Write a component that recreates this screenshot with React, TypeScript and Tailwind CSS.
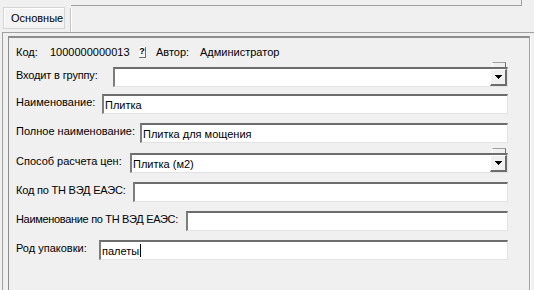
import React from "react";

const inputCls =
  "relative h-[20px] bg-white border-t-2 border-l-2 border-r border-b border-t-[#6d6d6d] border-l-[#7d7d7d] border-r-[#e3e3e3] border-b-[#e3e3e3] flex items-center";

function DropBtn() {
  return (
    <>
      <div className="absolute right-[1px] top-[-7px] w-[14px] h-[5px] border-t border-l border-r border-t-[#a0a0a0] border-l-white border-r-[#6d6d6d] bg-[#f0f0f0]" />
      <div className="absolute right-0 top-0 w-[17px] h-[17px] bg-[#f0f0f0] border-t border-l border-t-white border-l-white border-r-2 border-b-2 border-r-[#6d6d6d] border-b-[#6d6d6d] flex items-center justify-center">
        <svg width="7" height="4" viewBox="0 0 7 4">
          <path d="M0 0H7V1H6V2H5V3H4V4H3V3H2V2H1V1H0Z" fill="#000" />
        </svg>
      </div>
    </>
  );
}

function Row({
  label,
  labelW,
  mt,
  value,
  combo,
  caret,
  ls,
}: {
  label: string;
  labelW: number;
  mt: number;
  value?: string;
  combo?: boolean;
  caret?: boolean;
  ls?: number;
}) {
  return (
    <div className="flex items-start" style={{ marginTop: mt }}>
      <div
        className="leading-[16px] shrink-0 whitespace-nowrap"
        style={{ width: labelW, letterSpacing: ls ?? 0 }}
      >
        {label}
      </div>
      <div className={inputCls + " w-0 flex-1"}>
        {value && <span className="pl-[1px] leading-[16px]">{value}</span>}
        {caret && <span className="ml-[1px] w-px h-[13px] bg-black" />}
        {combo && <DropBtn />}
      </div>
    </div>
  );
}

export default function App() {
  return (
    <div
      className="w-[534px] h-[290px] bg-[#f0f0f0] overflow-hidden flex flex-col text-[11px] text-black"
      style={{ fontFamily: '"Liberation Sans", Arial, sans-serif' }}
    >
      <div className="h-[32px] flex items-start shrink-0">
        <div className="ml-[3px] mt-[7px] w-[62px] h-[22px] border border-[#d4d4d4] bg-[#f3f3f3] flex items-center pl-[7px] shadow-[inset_1px_1px_0_#ffffff]">
          Основные
        </div>
        <div className="ml-[5px] mt-[8px] h-[24px] w-px bg-[#c4c4c4] shadow-[1px_0_0_#ffffff]" />
        <div className="h-[6px] w-[451px] border-b border-r border-[#a0a0a0]" />
      </div>
      <div className="flex-1 ml-[2px] border-l border-t border-[#a0a0a0] pt-[3px] pl-[5px] pr-[4px]">
        <div className="h-full border-t-2 border-l border-r border-t-[#8c8c8c] border-l-[#8c8c8c] border-r-[#a0a0a0] shadow-[1px_0_0_#ffffff] pl-[7px] pr-[21px] pt-[7px]">
          <div className="flex items-center h-[14px] whitespace-nowrap">
            <span className="w-[34px]">Код:</span>
            <span className="w-[89px]">1000000000013</span>
            <span className="w-[7px] h-[11px] bg-[#f4f4f4] border-r border-b border-[#6d6d6d] shadow-[inset_1px_1px_0_#ffffff] flex items-center justify-center text-[9px] font-bold leading-none">
              ?
            </span>
            <span className="ml-[10px] w-[44px]">Автор:</span>
            <span>Администратор</span>
          </div>
          <Row label="Входит в группу:" labelW={97} mt={8} combo ls={-0.15} />
          <Row label="Наименование:" labelW={86} mt={7} value="Плитка" />
          <Row label="Полное наименование:" labelW={124} mt={9} value="Плитка для мощения" />
          <Row label="Способ расчета цен:" labelW={114} mt={10} value="Плитка (м2)" combo />
          <Row label="Код по ТН ВЭД ЕАЭС:" labelW={117} mt={9} ls={-0.2} />
          <Row label="Наименование по ТН ВЭД ЕАЭС:" labelW={170} mt={9} ls={-0.32} />
          <Row label="Род упаковки:" labelW={83} mt={9} value="палеты" caret />
        </div>
      </div>
    </div>
  );
}
